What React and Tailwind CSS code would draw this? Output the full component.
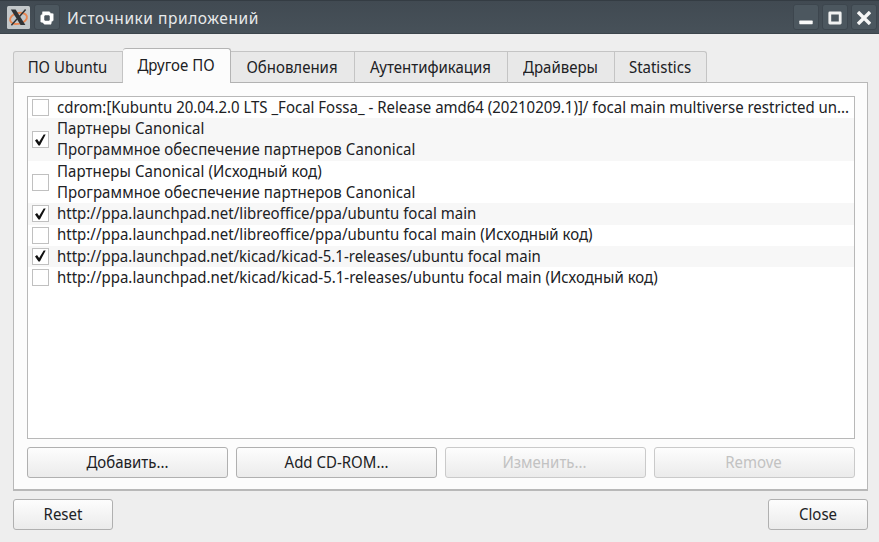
import React from "react";

const tabs = [
  { label: "ПО Ubuntu", size: "w-[110px]" },
  { label: "Другое ПО", size: "w-[108px]", active: true },
  { label: "Обновления", size: "w-[124px]" },
  { label: "Аутентификация", size: "w-[153px]" },
  { label: "Драйверы", size: "w-[107px]" },
  { label: "Statistics", size: "w-[92px]" },
];

const sources = [
  { lines: ["cdrom:[Kubuntu 20.04.2.0 LTS _Focal Fossa_ - Release amd64 (20210209.1)]/ focal main multiverse restricted un..."], tracking: "tracking-[-0.01px]" },
  { lines: ["Партнеры Canonical", "Программное обеспечение партнеров Canonical"], checked: true, tracking: "tracking-[0.08px]" },
  { lines: ["Партнеры Canonical (Исходный код)", "Программное обеспечение партнеров Canonical"], tracking: "tracking-[0.08px]" },
  { lines: ["http://ppa.launchpad.net/libreoffice/ppa/ubuntu focal main"], checked: true },
  { lines: ["http://ppa.launchpad.net/libreoffice/ppa/ubuntu focal main (Исходный код)"] },
  { lines: ["http://ppa.launchpad.net/kicad/kicad-5.1-releases/ubuntu focal main"], checked: true, tracking: "tracking-[-0.01px]" },
  { lines: ["http://ppa.launchpad.net/kicad/kicad-5.1-releases/ubuntu focal main (Исходный код)"] },
];

// Slightly condensed lettering: full width, a little extra height.
function Label({ children }) {
  return <span className="block origin-[50%_76%] scale-y-[1.07]">{children}</span>;
}

function Tab({ label, size, active }) {
  return (
    <div
      className={
        size +
        " flex shrink-0 items-center justify-center whitespace-nowrap border-t border-r pr-px " +
        (active
          ? "h-[35px] rounded-t-[3px] border-[#b4b4b4] bg-[#fcfcfc] pb-px"
          : "h-[32px] border-b border-t-[#c4c4c4] border-r-[#c4c4c4] border-b-[#b2b2b2] bg-[#e8e8e8] first:rounded-tl-[3px] first:border-l first:border-l-[#c4c4c4] last:rounded-tr-[3px]")
      }
    >
      <Label>{label}</Label>
    </div>
  );
}

function CheckBox({ checked }) {
  return (
    <div className="flex size-[17px] shrink-0 items-center justify-center border border-[#c0c0c0] bg-white">
      {checked && (
        <svg width="11" height="12" viewBox="0 0 11 12">
          <path d="M0 6.4 2 5 4.1 8 8.7.4h2L4.9 11.5H3.5Z" fill="#111" />
        </svg>
      )}
    </div>
  );
}

function PushButton({ children, className = "", disabled }) {
  return (
    <button
      disabled={disabled}
      className={
        "flex h-[31px] items-center justify-center rounded-[3px] border bg-linear-to-b from-[#fdfdfd] to-[#ebebeb] " +
        (disabled ? "border-[#cacaca] pr-[2px] text-[#c2c2c2] " : "border-[#b0b0b0] ") +
        className
      }
    >
      <Label>{children}</Label>
    </button>
  );
}

function TitleButton({ children }) {
  return (
    <div className="flex size-[26px] items-center justify-center rounded-[3px] border border-[#3d464e] bg-[#4c575f] pt-[2px]">
      {children}
    </div>
  );
}

export default function App() {
  return (
    <div className="flex h-[542px] w-[879px] flex-col overflow-hidden bg-[#eeeeee] font-['Noto_Sans',sans-serif] text-[15px] leading-[21px] text-[#202124]">
      <header className="flex h-[34px] items-center border-t border-b border-t-[#343c43] border-b-[#3c454c] bg-linear-to-b from-[#414a52] to-[#475159] pt-px pr-[2px] pb-px pl-[7px] text-[#e8eaeb]">
        <svg width="23" height="23" viewBox="0 0 23 23">
          <rect width="23" height="23" rx="1.5" fill="#c3c8ca" />
          <ellipse cx="11.5" cy="12.4" rx="8.6" ry="5.4" fill="none" stroke="#e98753" strokeWidth="1.9" transform="rotate(-14 11.5 12.4)" />
          <path d="M3.8 3.5h4.8l9.8 15.6h-4.8Z" fill="#303336" />
          <path d="M18.6 3.5 12.5 10.6M10 13l-5.6 6.2" stroke="#303336" strokeWidth="1.5" />
        </svg>
        <div className="ml-1">
          <TitleButton>
            <svg width="14" height="14" viewBox="0 0 14 14">
              <path fillRule="evenodd" d="M2.6.8h6.8l1.4 1.8 2.4.2v6.6l-1.8 1.4-.4 2.4H4.4l-1.6-1.8-2-.4V4.4l1.6-1.2ZM5 4 4 5v4l1 1h4l1-1V5L9 4Z" fill="#fff" stroke="#fff" strokeWidth=".5" strokeLinejoin="round" />
            </svg>
          </TitleButton>
        </div>
        <span className="ml-[7px] pt-[3px] text-[15.5px] tracking-[0.55px] whitespace-nowrap">Источники приложений</span>
        <div className="ml-auto flex gap-[3px]">
          <TitleButton>
            <svg width="14" height="14" viewBox="0 0 14 14"><rect x=".3" y="9.6" width="13.4" height="3.6" rx=".6" fill="#fafafa" /></svg>
          </TitleButton>
          <TitleButton>
            <svg width="14" height="14" viewBox="0 0 14 14"><path d="M1.8 2h10.4v10H1.8Z" fill="none" stroke="#f0f1f1" strokeWidth="2.8" strokeLinejoin="round" /></svg>
          </TitleButton>
          <TitleButton>
            <svg width="14" height="14" viewBox="0 0 14 14"><path d="m2.2 2.2 9.6 9.6M11.8 2.2l-9.6 9.6" stroke="#f5f5f5" strokeWidth="3.4" strokeLinecap="square" /></svg>
          </TitleButton>
        </div>
      </header>
      <main className="flex flex-col pt-[14px] pr-[11px] pl-[13px]">
        <nav className="z-10 -mb-px flex h-[35px] items-end">
          {tabs.map((t) => (
            <Tab key={t.label} {...t} />
          ))}
        </nav>
        <section className="flex h-[409px] w-[855px] flex-col border border-b-2 border-[#b8b8b8] bg-[#fcfcfc] px-[13px] pt-[13px]">
          <div className="h-[343px] w-[828px] shrink-0 overflow-hidden border border-[#b8b8b8] bg-white">
            {sources.map((s, i) => (
              <div
                key={i}
                className={
                  "flex items-center pl-1 " +
                  (i % 2 ? "bg-[#f7f7f7] " : "") +
                  (s.lines.length > 1 ? "h-[42.5px]" : "h-[21.25px]")
                }
              >
                <CheckBox checked={s.checked} />
                <div className={"ml-2 pb-[0.5px] whitespace-nowrap " + (s.tracking || "")}>
                  {s.lines.map((l) => (
                    <Label key={l}>{l}</Label>
                  ))}
                </div>
              </div>
            ))}
          </div>
          <div className="mt-2 grid w-[828px] grid-cols-4 gap-2">
            <PushButton>Добавить...</PushButton>
            <PushButton>Add CD-ROM...</PushButton>
            <PushButton disabled>Изменить...</PushButton>
            <PushButton disabled>Remove</PushButton>
          </div>
        </section>
        <footer className="mt-2 flex w-[855px] justify-between">
          <PushButton className="w-[100px]">Reset</PushButton>
          <PushButton className="w-[100px]">Close</PushButton>
        </footer>
      </main>
    </div>
  );
}
